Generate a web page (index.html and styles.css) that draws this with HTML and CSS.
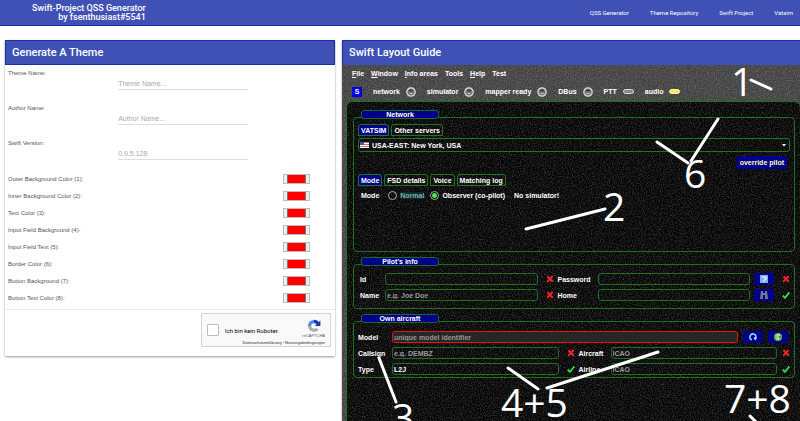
FILE: index.html
```html
<!DOCTYPE html>
<html lang="en">
<head>
<meta charset="utf-8">
<title>Swift-Project QSS Generator</title>
<link rel="stylesheet" href="styles.css">
</head>
<body>
<svg class="defs" aria-hidden="true">
  <filter id="grain" x="0" y="0" width="100%" height="100%">
    <feTurbulence type="fractalNoise" baseFrequency="0.9" numOctaves="3" seed="4"/>
    <feColorMatrix values="0 0 0 0 1  0 0 0 0 1  0 0 0 0 1  1.4 0 0 0 -0.5"/>
  </filter>
  <symbol id="led" viewBox="0 0 10 10"><circle cx="5" cy="5" r="4.2" fill="#777" stroke="#ddd" stroke-width="1.2"/><path d="M2.4 4.2a2.7 2.4 0 0 1 5.2 0z" fill="#333"/><path d="M3 6.200a2.500 2 0 0 0 4 0z" fill="#eee"/></symbol>
  <symbol id="cross" viewBox="0 0 8 8"><path d="M1.4 1.2 6.8 6.8M6.6 1 1.2 6.9" stroke="#f02528" stroke-width="2" fill="none"/></symbol>
  <symbol id="check" viewBox="0 0 8 8"><path d="M.7 4.6 3 6.8 7.4 1.4" stroke="#2fe050" stroke-width="1.8" fill="none"/></symbol>
</svg>

<header class="topbar">
  <div class="brand">Swift-Project QSS Generator<br>by fsenthusiast#5541</div>
  <nav class="links">
    <a href="#">QSS Generator</a>
    <a href="#">Theme Repository</a>
    <a href="#">Swift Project</a>
    <a href="#">Vatsim</a>
  </nav>
</header>

<main class="page">
  <form class="card">
    <h1 class="card-title">Generate A Theme</h1>
    <div class="fields">
      <div class="field"><label for="theme">Theme Name:</label><input id="theme" type="text" placeholder="Theme Name..."></div>
      <div class="field"><label for="author">Author Name:</label><input id="author" type="text" placeholder="Author Name..."></div>
      <div class="field"><label for="version">Swift Version:</label><input id="version" type="text" placeholder="0.9.5.128"></div>
      <div class="color"><label for="c1">Outer Background Color (1):</label><input id="c1" type="color" value="#ff0000"></div>
      <div class="color"><label for="c2">Inner Background Color (2):</label><input id="c2" type="color" value="#ff0000"></div>
      <div class="color"><label for="c3">Text Color (3):</label><input id="c3" type="color" value="#ff0000"></div>
      <div class="color"><label for="c4">Input Field Background (4):</label><input id="c4" type="color" value="#ff0000"></div>
      <div class="color"><label for="c5">Input Field Text (5):</label><input id="c5" type="color" value="#ff0000"></div>
      <div class="color"><label for="c6">Border Color (6):</label><input id="c6" type="color" value="#ff0000"></div>
      <div class="color"><label for="c7">Button Background (7):</label><input id="c7" type="color" value="#ff0000"></div>
      <div class="color"><label for="c8">Button Text Color (8):</label><input id="c8" type="color" value="#ff0000"></div>
    </div>
    <div class="actions">
      <div class="captcha">
        <input id="robot" type="checkbox">
        <label for="robot">Ich bin kein Roboter.</label>
        <div class="captcha-brand">
          <svg width="14" height="14" viewBox="0 0 14 14"><path d="M1 7a6 6 0 0 1 4.500-5.800L7 .8v3.400A2.800 2.800 0 0 0 4.200 7z" fill="#4a8af4"/><path d="M7 .8A6 6 0 0 1 11.800 3L13.400 1.400V7H7.800L9.600 5.200A3 3 0 0 0 7 4.200z" fill="#1c3aa9"/><path d="M1 7h3.200a2.800 2.800 0 0 0 5 1.700l2.600 2A6.200 6.200 0 0 1 1 7z" fill="#ababab"/></svg>
          <span>reCAPTCHA</span>
        </div>
        <small>Datenschutzerklärung • Nutzungsbedingungen</small>
      </div>
    </div>
  </form>

  <section class="card guide">
    <h2 class="card-title">Swift Layout Guide</h2>
    <div class="client">
      <svg class="noise" aria-hidden="true"><rect width="100%" height="100%" filter="url(#grain)"/></svg>
      <nav class="menu">
        <span><u>F</u>ile</span><span><u>W</u>indow</span><span><u>I</u>nfo areas</span><span>Tools</span><span><u>H</u>elp</span><span>Test</span>
      </nav>
      <div class="status">
        <b class="logo">S</b>
        <span>network <svg class="led"><use href="#led"/></svg></span>
        <span>simulator <svg class="led"><use href="#led"/></svg></span>
        <span>mapper ready <svg class="led"><use href="#led"/></svg></span>
        <span>DBus <svg class="led"><use href="#led"/></svg></span>
        <span>PTT <i class="pill"></i></span>
        <span>audio <i class="pill on"></i></span>
      </div>

      <div class="inner">
        <svg class="noise dark" aria-hidden="true"><rect width="100%" height="100%" filter="url(#grain)"/></svg>
        <section class="group">
          <h3>Network</h3>
          <div class="box network">
            <div class="tabs"><button type="button" class="active">VATSIM</button><button type="button">Other servers</button></div>
            <div class="combo">
              <svg width="9" height="6" viewBox="0 0 9 6"><path fill="#fff" d="M0 0h9v6H0z"/><path d="M0 .5h9M0 2.500h9M0 4.500h9" stroke="#e0606a"/><path fill="#3c55a8" d="M0 0h4v3H0z"/></svg>
              <select aria-label="Server"><option>USA-EAST: New York, USA</option></select>
              <svg width="4" height="3" viewBox="0 0 4 3"><path fill="#fff" d="M0 0h4L2 2.500z"/></svg>
            </div>
            <button type="button" class="override">override pilot</button>
            <div class="tabs"><button type="button" class="active">Mode</button><button type="button">FSD details</button><button type="button">Voice</button><button type="button">Matching log</button></div>
            <div class="mode">
              <span>Mode</span>
              <input type="radio" name="mode" id="normal"><label class="muted" for="normal">Normal</label>
              <input type="radio" name="mode" id="observer" checked><label for="observer">Observer (co-pilot)</label>
              <span class="nosim">No simulator!</span>
            </div>
          </div>
        </section>

        <section class="group">
          <h3>Pilot's info</h3>
          <div class="box pilot">
            <label for="pid">Id</label><input id="pid" type="text"><svg class="mark"><use href="#cross"/></svg>
            <label for="pw">Password</label><input id="pw" type="password">
            <button type="button" class="icon" aria-label="Unlock"><svg viewBox="0 0 8 8"><path fill="#7fb0f0" d="M0 0h8v8H0z"/><path d="M2 2h4v2L4 5v2" stroke="#fff" fill="none"/></svg></button>
            <svg class="mark"><use href="#cross"/></svg>
            <label for="pname">Name</label><input id="pname" type="text" placeholder="e.g. Joe Doe"><svg class="mark"><use href="#cross"/></svg>
            <label for="home">Home</label><input id="home" type="text">
            <button type="button" class="icon" aria-label="Find"><svg viewBox="0 0 8 8"><path fill="#77778a" d="M1 0h2v2h2V0h2l1 8H5V4H3v4H0z"/></svg></button>
            <svg class="mark"><use href="#check"/></svg>
          </div>
        </section>

        <section class="group">
          <h3>Own aircraft</h3>
          <div class="box">
            <div class="model">
              <label for="model">Model</label><input id="model" class="invalid" type="text" placeholder="unique model identifier">
              <button type="button" class="icon" aria-label="Reload"><svg viewBox="0 0 8 8"><path d="M3 6.800A3 3 0 1 1 6.800 4.800" stroke="#8fd8ff" stroke-width="1.500" fill="none"/><path fill="#d8f4ff" d="M4.500 4 8 5 6 7.500z"/></svg></button>
              <button type="button" class="icon" aria-label="Sync"><svg viewBox="0 0 8 8"><circle cx="4" cy="4" r="4" fill="#6fb558"/><path d="M6 2.300C3.500 1 1.500 3 3.500 4s2.500 2-1 2" stroke="#f2fff0" fill="none"/><path d="M5 4h2" stroke="#17652c"/></svg></button>
            </div>
            <div class="aircraft">
              <label for="callsign">Callsign</label><input id="callsign" type="text" placeholder="e.g. DEMBZ"><svg class="mark"><use href="#cross"/></svg>
              <label for="icao">Aircraft</label><input id="icao" type="text" placeholder="ICAO"><svg class="mark"><use href="#cross"/></svg>
              <label for="type">Type</label><input id="type" type="text" value="L2J"><svg class="mark"><use href="#check"/></svg>
              <label for="airline">Airline</label><input id="airline" type="text" placeholder="ICAO"><svg class="mark"><use href="#check"/></svg>
            </div>
          </div>
        </section>
      </div>

      <svg class="notes">
        <path d="M409 15 429 24M315 77 346 98M376 54 349 96M184 164 263 144M37 293 54 337M166 303 196 324M205 323 316 287M408 351 415 358"/>
        <text x="389" y="31">1</text>
        <text x="261" y="156">2</text>
        <text x="342" y="123">6</text>
        <text x="50" y="367">3</text>
        <text x="159" y="352">4+5</text>
        <text x="382" y="348">7+8</text>
      </svg>
    </div>
  </section>
</main>
</body>
</html>
```
FILE: styles.css
```css
* { box-sizing: border-box; }

body {
  display: flex;
  flex-direction: column;
  height: 100vh;
  margin: 0;
  overflow: hidden;
  background: #fff;
  font-family: "Liberation Sans", Arial, sans-serif;
  font-size: 7px;
}

h1, h2, h3 { margin: 0; font-weight: 400; }
input, button, select { margin: 0; padding: 0; border: 0; font: inherit; color: inherit; min-width: 0; }
button { white-space: nowrap; }
.defs { position: absolute; width: 0; height: 0; }

.topbar {
  display: flex;
  flex: none;
  justify-content: space-between;
  align-items: center;
  height: 26px;
  padding: 0 7px 0 32px;
  border-bottom: 1px solid #1a2caa;
  background: #3f51b5;
  color: #fff;
}
.brand { font: 500 9px/9px Roboto, sans-serif; text-align: right; }
.links { display: flex; gap: 21px; font-family: Roboto, sans-serif; font-size: 6px; }
.links a { color: #fff; text-decoration: none; }

.page { display: flex; flex: 1; gap: 7px; min-height: 0; padding: 14px 0 0 5px; }
.card { flex: 330; min-width: 0; align-self: flex-start; background: #fff; box-shadow: 0 1px 2px #0006; }
.card-title {
  flex: none;
  height: 25px;
  padding: 0 6px;
  border: 1px solid #1a2caa;
  background: #3f51b5;
  color: #fff;
  font-family: Roboto, sans-serif;
  font-size: 11px;
  font-weight: 500;
  line-height: 24px;
}

.fields { padding: 0 3px 3px; color: #555; font-size: 6px; border-bottom: 1px solid #e8e8e8; }
.field { display: grid; grid-template-columns: 34% 40% 1fr; grid-template-rows: 13px 12px; height: 35px; }
.field label { line-height: 16px; }
.field input { grid-area: 2 / 2; border-bottom: 1px solid #ddd; outline: 0; font-size: 7px; }
.field input::placeholder { color: #aaa; }
.color { display: flex; justify-content: space-between; align-items: center; height: 17px; padding-right: 22px; }
.color input { width: 27px; height: 10px; padding: 0 3px; border: 1px solid #bbb; background: #eee; }
.color input::-webkit-color-swatch-wrapper { padding: 0; }
.color input::-webkit-color-swatch { border: 1px solid #777; border-width: 0 1px; }

.actions { display: flex; justify-content: flex-end; padding: 3px 4px 9px; }
.captcha {
  display: grid;
  grid-template-columns: 12px 1fr auto;
  grid-template-rows: 24px 6px;
  column-gap: 6px;
  align-items: center;
  width: 130px;
  padding: 1px 5px;
  border: 1px solid #d3d3d3;
  border-radius: 1px;
  background: #f9f9f9;
}
.captcha input { appearance: none; width: 12px; height: 12px; margin-top: 5px; border: 1px solid #bbb; border-radius: 1px; background: #fff; }
.captcha label { margin-top: 6px; font-family: Roboto, sans-serif; font-size: 6px; white-space: nowrap; }
.captcha-brand { display: flex; flex-direction: column; align-items: center; padding-top: 3px; color: #555; font-size: 4px; line-height: 6px; }
.captcha small { grid-column: 1 / -1; color: #333; font-family: Roboto, sans-serif; font-size: 4px; line-height: 5px; text-align: right; }

.guide { display: flex; flex-direction: column; flex: 458; align-self: stretch; }
.guide .card-title { border-width: 1px 0 0 1px; }
.client {
  position: relative;
  display: flex;
  flex: 1;
  flex-direction: column;
  min-height: 0;
  padding: 0 0 0 4px;
  background: #404040;
  color: #fff;
  font-weight: 700;
}
.noise { position: absolute; inset: 0; width: 100%; height: 100%; opacity: .3; }
.menu, .status { position: relative; display: flex; align-items: center; padding-left: 6px; }
.menu { gap: 7px; height: 17px; }
.status { gap: 11px; height: 19px; }
.status span { display: flex; align-items: center; gap: 6px; }
.logo { width: 10px; height: 10px; background: #0000e0; line-height: 10px; text-align: center; }
.led { width: 10px; height: 10px; }
.pill { width: 11px; height: 5px; border: 1px solid #ddd; border-radius: 3px; background: #888; }
.pill.on { border-color: #fff29a; background: #f5e96a; }

.inner {
  position: relative;
  flex: 1;
  padding: 8px 5px 0 6px;
  border: 1px solid #1f6e22;
  border-width: 1px 0 0 1px;
  border-radius: 6px 6px 0 0;
  background: #020202;
  overflow: hidden;
}
.group { position: relative; margin-bottom: 5px; }
.group h3 {
  position: relative;
  z-index: 1;
  width: 78px;
  height: 9px;
  margin: 0 0 -2px 8px;
  border: 1px solid #17682a;
  border-radius: 3px;
  background: #00008c;
  font-size: 7px;
  font-weight: 700;
  line-height: 8px;
  text-align: center;
}
.box { padding: 9px 4px 0; border: 1px solid #1f6e22; border-radius: 4px; }
.network { display: flex; flex-direction: column; height: 135px; padding-top: 6px; }

.tabs { display: flex; gap: 2px; }
.tabs button { height: 12px; padding: 0 2px; border: 1px solid #1f7425; border-radius: 3px 3px 0 0; background: none; }
.tabs .active { background: #00008c; }
.combo { display: flex; align-items: center; gap: 3px; height: 14px; margin: 2px 0 4px; padding: 0 3px 0 1px; border: 1px solid #1f7425; border-radius: 3px; }
.combo select { flex: 1; appearance: none; background: none; }
.override { align-self: flex-end; height: 13px; margin: 0 3px 5px; padding: 0 3px; background: #00008c; color: #ffffb0; }
.mode { display: flex; align-items: center; gap: 3px; height: 18px; padding-left: 3px; }
.mode input { appearance: none; width: 9px; height: 9px; border: 1px solid #aaa; border-radius: 50%; }
.mode input:checked { background: radial-gradient(#40f040 0 2px, #000 3px); }
.mode span + input { margin-left: 6px; }
.muted { margin-right: 3px; background: #0b2a2c; color: #8aa; }
.nosim { margin-left: 6px; }

.box input[type="text"], .box input[type="password"] {
  width: 100%;
  height: 12px;
  padding: 0 1px;
  border: 1px solid #1f6e22;
  border-radius: 3px;
  background: none;
}
.box input::placeholder { color: #999; opacity: 1; }
.box input[type="text"].invalid { border-color: #f01010; background: #262626; }
.pilot, .aircraft { display: grid; align-items: center; gap: 4px; }
.pilot { grid-template-columns: 21px 1fr 12px 36px 1fr 20px 12px; padding: 8px 4px 7px 6px; }
.aircraft { grid-template-columns: 30px 1fr 12px 28px 1fr 9px; padding-bottom: 2px; }
.model { display: grid; grid-template-columns: 29px 1fr 20px 20px; gap: 5px; align-items: center; padding: 0 2px 4px 0; }
.icon { display: flex; align-items: center; justify-content: center; width: 20px; height: 12px; background: #00008c; }
.icon svg { width: 8px; height: 8px; }
.mark { width: 8px; height: 8px; justify-self: end; }

.notes { position: absolute; inset: 0; width: 100%; height: 100%; pointer-events: none; }
.notes path { fill: none; stroke: #fff; stroke-width: 3; stroke-linecap: round; }
.notes text { fill: #fff; font: 400 39px "Open Sans", "Noto Sans", sans-serif; }
```
